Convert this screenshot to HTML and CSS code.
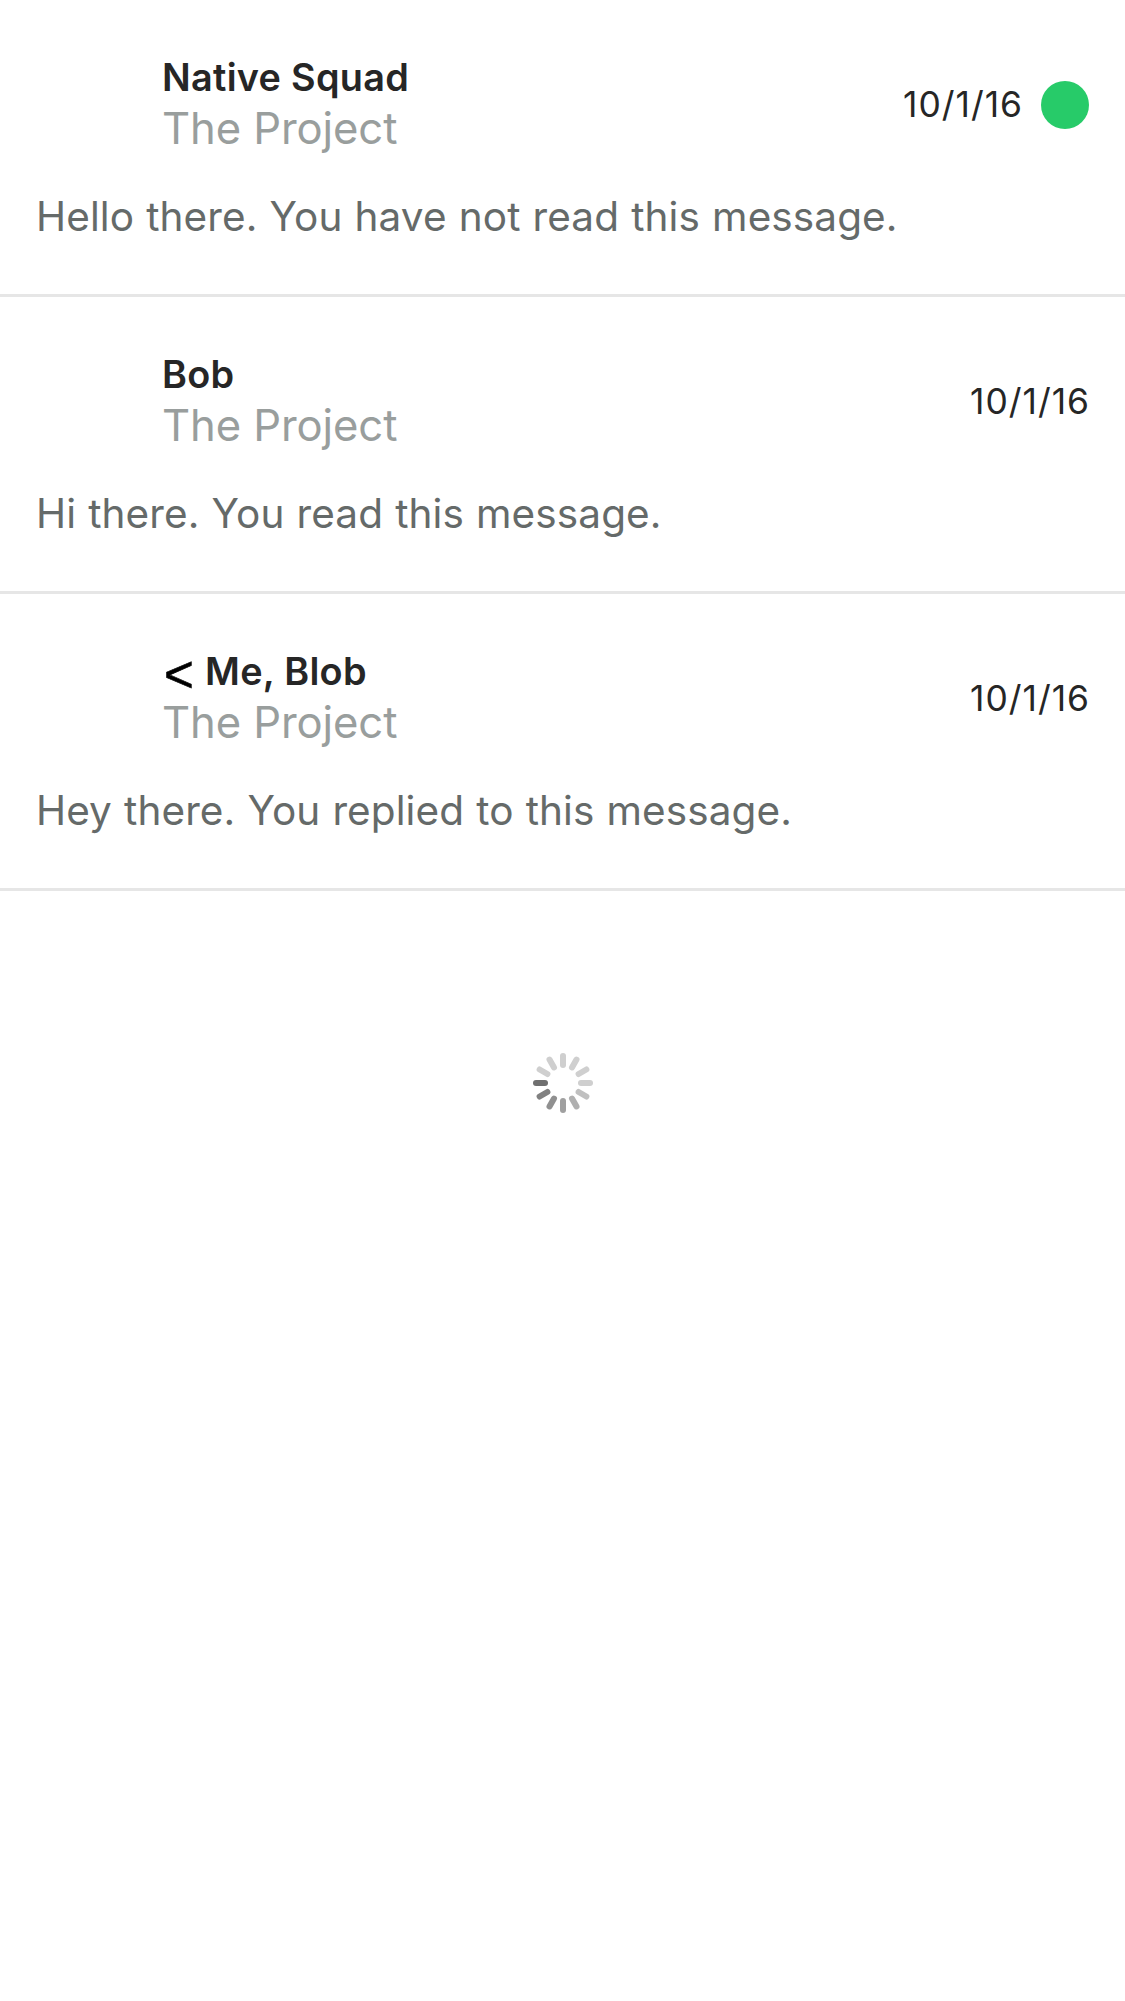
FILE: index.html
```html
<!DOCTYPE html>
<html lang="en">
<head>
<meta charset="utf-8">
<title>Messages</title>
<link rel="stylesheet" href="styles.css">
</head>
<body>
<main class="inbox">
  <article class="message">
    <header class="message-header">
      <div class="sender">
        <h2 class="name">Native Squad</h2>
        <p class="project">The Project</p>
      </div>
      <time class="date">10/1/16</time>
      <span class="unread-dot"></span>
    </header>
    <p class="preview">Hello there. You have not read this message.</p>
  </article>
  <article class="message">
    <header class="message-header">
      <div class="sender">
        <h2 class="name">Bob</h2>
        <p class="project">The Project</p>
      </div>
      <time class="date">10/1/16</time>
    </header>
    <p class="preview">Hi there. You read this message.</p>
  </article>
  <article class="message">
    <header class="message-header">
      <div class="sender">
        <h2 class="name"><span class="reply-mark">&lt;</span>Me, Blob</h2>
        <p class="project">The Project</p>
      </div>
      <time class="date">10/1/16</time>
    </header>
    <p class="preview">Hey there. You replied to this message.</p>
  </article>
  <svg class="spinner" viewBox="-30 -30 60 60" fill="none" stroke-width="6" stroke-linecap="round">
    <path d="M0-18V-27" stroke="#cfcfcf"/>
    <path d="M0-18V-27" stroke="#cfcfcf" transform="rotate(30)"/>
    <path d="M0-18V-27" stroke="#cfcfcf" transform="rotate(60)"/>
    <path d="M0-18V-27" stroke="#cfcfcf" transform="rotate(90)"/>
    <path d="M0-18V-27" stroke="#c0c0c0" transform="rotate(120)"/>
    <path d="M0-18V-27" stroke="#b0b0b0" transform="rotate(150)"/>
    <path d="M0-18V-27" stroke="#a0a0a0" transform="rotate(180)"/>
    <path d="M0-18V-27" stroke="#909090" transform="rotate(210)"/>
    <path d="M0-18V-27" stroke="#818181" transform="rotate(240)"/>
    <path d="M0-18V-27" stroke="#6f6f6f" transform="rotate(270)"/>
    <path d="M0-18V-27" stroke="#cfcfcf" transform="rotate(300)"/>
    <path d="M0-18V-27" stroke="#cfcfcf" transform="rotate(330)"/>
  </svg>
</main>
</body>
</html>
```
FILE: styles.css
```css
body {
  margin: 0;
  background: #fff;
  font-family: Inter, "Liberation Sans", sans-serif;
}

.inbox {
  display: flex;
  flex-direction: column;
}

.message {
  box-sizing: border-box;
  height: 297px;
  padding: 54px 36px 0;
  border-bottom: 3px solid #e6e6e6;
}

.message-header {
  display: flex;
  align-items: center;
  height: 102px;
}

.sender {
  flex: 1;
  padding-left: 126px;
}

.name,
.project,
.preview {
  margin: 0;
  white-space: nowrap;
}

.name {
  display: flex;
  align-items: center;
  height: 48px;
  font-size: 37.8px;
  font-weight: 600;
  line-height: 46px;
  letter-spacing: 0.3px;
  color: #262626;
  padding-bottom: 2px;
  box-sizing: border-box;
}

.project {
  height: 54px;
  font-size: 43.6px;
  line-height: 54px;
  letter-spacing: -0.1px;
  color: #999e9d;
}

.date {
  padding-bottom: 1px;
  font-size: 35.4px;
  letter-spacing: 1px;
  margin-right: -1px;
  color: #262626;
}

.unread-dot {
  width: 48px;
  height: 48px;
  margin-left: 19px;
  border-radius: 50%;
  background: #27cb69;
}

.preview {
  margin-top: 35px;
  font-size: 40.5px;
  line-height: 51px;
  letter-spacing: 0.1px;
  word-spacing: 0.6px;
  color: #656a69;
}

.reply-mark {
  width: 41px;
  padding-top: 8px;
  padding-left: 2px;
  font-family: "Liberation Sans", sans-serif;
  font-size: 51px;
  font-weight: 400;
  color: #000;
  -webkit-text-stroke: 0.6px #000;
}

.spinner {
  align-self: center;
  width: 60px;
  height: 60px;
  margin-top: 162px;
}
```
